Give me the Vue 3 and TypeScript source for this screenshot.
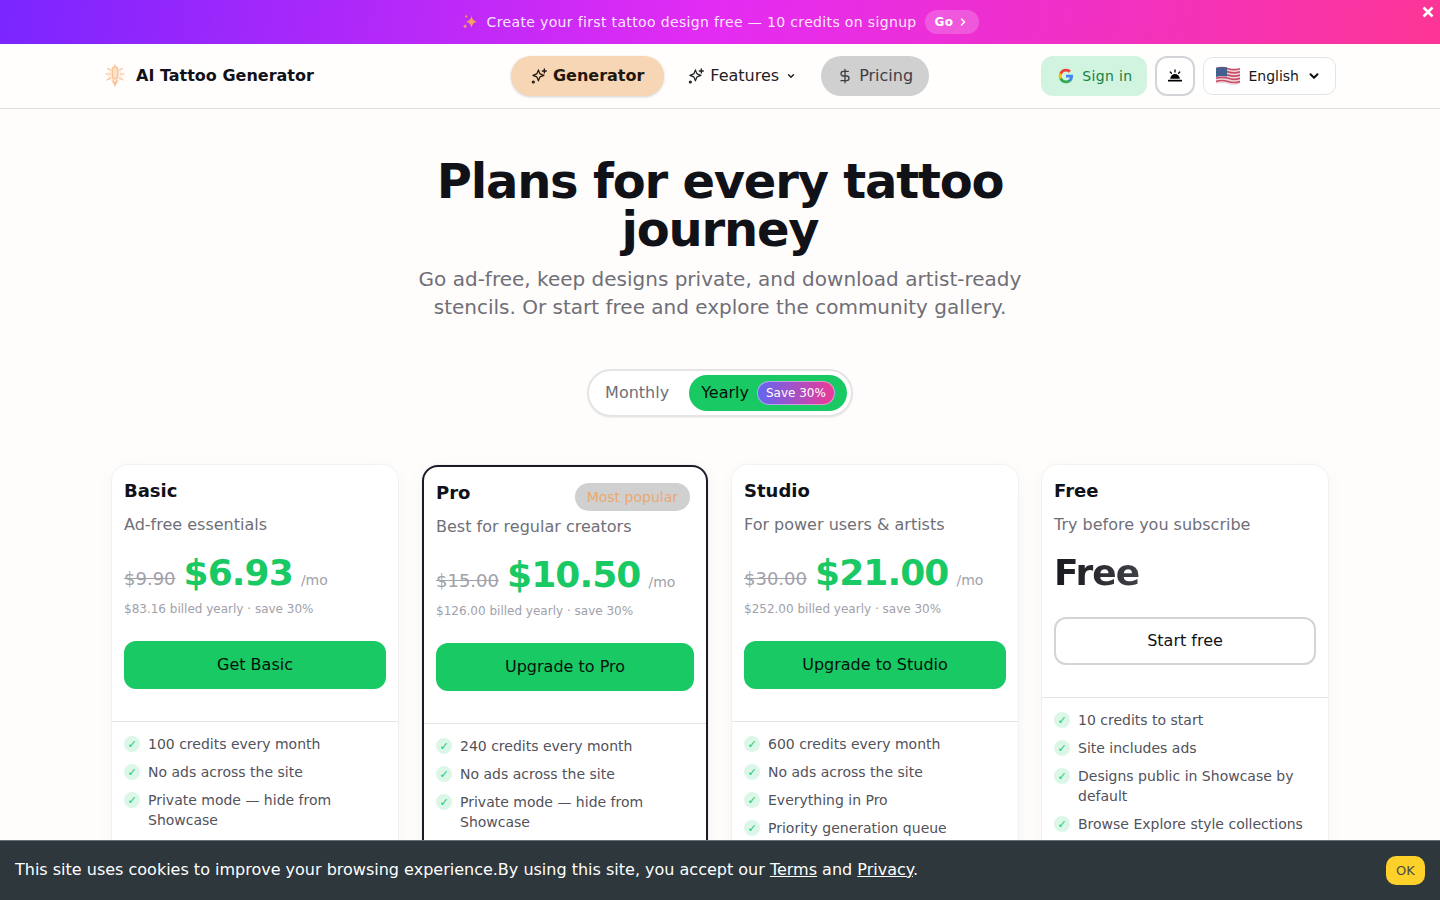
<template>
  <div class="promo">
    <svg class="promo-spark" viewBox="0 0 24 24" width="18" height="18">
      <path d="M14 3c.8 5 2.600 7.200 7 8.500-4.400 1.300-6.200 3.500-7 8.500-.8-5-2.600-7.200-7-8.500 4.400-1.300 6.200-3.500 7-8.500z" fill="#eda05f" />
      <path d="M5.500 14c.4 2.300 1.200 3.200 3 3.800-1.800.6-2.600 1.500-3 3.800-.4-2.300-1.200-3.200-3-3.800 1.800-.6 2.600-1.500 3-3.800z" fill="#eda05f" />
      <path d="M7 1.500c.3 1.700.9 2.400 2.200 2.800C7.900 4.700 7.300 5.400 7 7c-.3-1.600-.9-2.300-2.200-2.700C6.100 3.900 6.700 3.200 7 1.500z" fill="#eda05f" />
    </svg>
    <span class="promo-text">Create your first tattoo design free — 10 credits on signup</span>
    <a class="promo-go">Go
      <svg viewBox="0 0 24 24" width="12" height="12" fill="none" stroke="currentColor" stroke-width="3" stroke-linecap="round" stroke-linejoin="round"><path d="m9 18 6-6-6-6" /></svg>
    </a>
    <button class="promo-close" aria-label="Close">
      <svg viewBox="0 0 12 12" width="12" height="12" fill="none" stroke="#fff" stroke-width="2.600"><path d="M1.500 1.500l9 9M10.500 1.500l-9 9" /></svg>
    </button>
  </div>

  <header class="topbar">
    <div class="topbar-inner">
      <a class="brand">
        <svg class="brand-logo" viewBox="0 0 22 24" width="22" height="24" fill="none" stroke="#f9bf92" stroke-width="1.100" stroke-linecap="round">
          <circle cx="11" cy="11" r="7.500" fill="#fff1e4" stroke="none" />
          <rect x="8.300" y="2.800" width="5.400" height="12" rx="2.700" fill="#fde2cb" stroke-width="1.300" />
          <path d="M9 16l2 5.500 2-5.500M9 18.500h4M11 .8v2" stroke-width="1.300" />
          <path d="M6.500 6L3.500 4.500M6 10H2M6.500 14l-3.500 2M15.500 6l3-1.500M16 10h4M15.500 14l3.500 2" />
        </svg>
        <span>AI Tattoo Generator</span>
      </a>

      <nav class="nav-links">
        <a class="nav-link generator">
          <svg viewBox="0 0 24 24" width="16" height="16" fill="none" stroke="currentColor" stroke-width="2" stroke-linecap="round" stroke-linejoin="round">
            <path d="M11 3l1.900 5.200a3 3 0 0 0 1.800 1.800L20 12l-5.300 2a3 3 0 0 0-1.800 1.800L11 21l-1.900-5.200a3 3 0 0 0-1.800-1.800L2 12l5.300-2a3 3 0 0 0 1.800-1.800z" transform="translate(1 0) scale(.92)" />
            <path d="M20 1.500v6M17 4.500h6" />
            <circle cx="3.500" cy="21" r="1.400" />
          </svg>
          Generator
        </a>
        <a class="nav-link features">
          <svg viewBox="0 0 24 24" width="16" height="16" fill="none" stroke="currentColor" stroke-width="2" stroke-linecap="round" stroke-linejoin="round">
            <path d="M11 3l1.900 5.200a3 3 0 0 0 1.800 1.800L20 12l-5.300 2a3 3 0 0 0-1.800 1.800L11 21l-1.900-5.200a3 3 0 0 0-1.800-1.800L2 12l5.300-2a3 3 0 0 0 1.800-1.800z" transform="translate(1 0) scale(.92)" />
            <path d="M20 1.500v6M17 4.500h6" />
            <circle cx="3.500" cy="21" r="1.400" />
          </svg>
          Features
          <svg class="caret" viewBox="0 0 24 24" width="10" height="10" fill="none" stroke="currentColor" stroke-width="3.500" stroke-linecap="round" stroke-linejoin="round"><path d="m6 9 6 6 6-6" /></svg>
        </a>
        <a class="nav-link pricing">
          <svg viewBox="0 0 24 24" width="16" height="16" fill="none" stroke="currentColor" stroke-width="2" stroke-linecap="round" stroke-linejoin="round">
            <path d="M12 2v20M17 5H9.500a3.500 3.500 0 0 0 0 7h5a3.500 3.500 0 0 1 0 7H6" />
          </svg>
          Pricing
        </a>
      </nav>

      <div class="topbar-actions">
        <button class="signin">
          <svg viewBox="0 0 24 24" width="16" height="16">
            <path fill="#4285F4" d="M22.560 12.250c0-.78-.07-1.530-.2-2.250H12v4.260h5.920c-.26 1.370-1.040 2.530-2.210 3.310v2.770h3.570c2.080-1.920 3.280-4.740 3.280-8.090z" />
            <path fill="#34A853" d="M12 23c2.970 0 5.460-.98 7.280-2.660l-3.570-2.770c-.98.660-2.230 1.060-3.710 1.060-2.860 0-5.290-1.930-6.160-4.530H2.180v2.840C3.990 20.530 7.700 23 12 23z" />
            <path fill="#FBBC05" d="M5.840 14.090c-.22-.66-.35-1.360-.35-2.090s.13-1.430.35-2.090V7.070H2.180C1.430 8.550 1 10.220 1 12s.43 3.450 1.180 4.930l3.660-2.840z" />
            <path fill="#EA4335" d="M12 5.380c1.620 0 3.060.56 4.210 1.640l3.150-3.150C17.450 2.090 14.970 1 12 1 7.700 1 3.990 3.470 2.180 7.070l3.660 2.840c.87-2.600 3.300-4.530 6.160-4.530z" />
          </svg>
          Sign in
        </button>
        <button class="theme-btn" aria-label="Theme">
          <svg viewBox="0 0 16 16" width="16" height="16" fill="#000">
            <path d="M3.200 10.800a4.800 4.800 0 0 1 9.600 0z" />
            <rect x="1" y="11.800" width="14" height="1.700" rx=".5" />
            <path d="M8 2v2M3.300 4l1.100 1.200M12.700 4l-1.100 1.200" stroke="#000" stroke-width="1.300" stroke-linecap="round" />
          </svg>
        </button>
        <button class="lang-btn">
          <svg viewBox="0 0 24 20" width="24" height="20">
            <path d="M0 2Q6 0 12 2T24 2V18Q18 20 12 18T0 18Z" fill="#efd9de" />
            <path v-for="n in 5" :key="n" :d="`M0 ${n * 3.200 - .5}Q6 ${n * 3.200 - 2.500} 12 ${n * 3.200 - .5}T24 ${n * 3.200 - .5}`" fill="none" stroke="#c94d66" stroke-width="1.700" />
            <path d="M0 2Q5 .3 11 1.500V10.500Q5 9.300 0 11Z" fill="#44608f" />
          </svg>
          English
          <svg viewBox="0 0 24 24" width="14" height="14" fill="none" stroke="#111" stroke-width="3.500" stroke-linecap="round" stroke-linejoin="round"><path d="m6 9 6 6 6-6" /></svg>
        </button>
      </div>
    </div>
  </header>

  <main class="pricing-page">
    <h1>Plans for every tattoo journey</h1>
    <p class="lead">Go ad-free, keep designs private, and download artist-ready stencils. Or start free and explore the community gallery.</p>

    <div class="billing-toggle">
      <button class="toggle-option" :class="{ active: billing === 'monthly' }" @click="billing = 'monthly'">Monthly</button>
      <button class="toggle-option" :class="{ active: billing === 'yearly' }" @click="billing = 'yearly'">
        Yearly
        <span class="save-tag">Save 30%</span>
      </button>
    </div>

    <section class="plan-grid">
      <article v-for="plan in plans" :key="plan.name" class="plan-card" :class="{ featured: plan.popular }">
        <span v-if="plan.popular" class="popular-tag">Most popular</span>
        <div class="plan-top">
          <h2>{{ plan.name }}</h2>
          <p class="plan-desc">{{ plan.desc }}</p>
          <div v-if="plan.price" class="price-row">
            <span class="old-price">{{ plan.oldPrice }}</span>
            <span class="price">{{ plan.price }}</span>
            <span class="per">/mo</span>
          </div>
          <div v-else class="price-row">
            <span class="price free">Free</span>
          </div>
          <p v-if="plan.billed" class="billed">{{ plan.billed }}</p>
          <button class="plan-cta" :class="{ outline: !plan.price }">{{ plan.cta }}</button>
        </div>
        <ul class="plan-features">
          <li v-for="item in plan.features" :key="item">
            <span class="tick">✓</span>
            <span>{{ item }}</span>
          </li>
        </ul>
      </article>
    </section>
  </main>

  <div class="cookie-bar">
    <p>This site uses cookies to improve your browsing experience.By using this site, you accept our <a>Terms</a> and <a>Privacy</a>.</p>
    <button class="cookie-ok">OK</button>
  </div>
</template>

<script setup lang="ts">
import { ref } from 'vue';

interface Plan {
  name: string;
  desc: string;
  oldPrice?: string;
  price?: string;
  billed?: string;
  cta: string;
  popular?: boolean;
  features: string[];
}

const billing = ref<'monthly' | 'yearly'>('yearly');

const plans: Plan[] = [
  {
    name: 'Basic',
    desc: 'Ad-free essentials',
    oldPrice: '$9.90',
    price: '$6.93',
    billed: '$83.16 billed yearly · save 30%',
    cta: 'Get Basic',
    features: ['100 credits every month', 'No ads across the site', 'Private mode — hide from Showcase']
  },
  {
    name: 'Pro',
    desc: 'Best for regular creators',
    oldPrice: '$15.00',
    price: '$10.50',
    billed: '$126.00 billed yearly · save 30%',
    cta: 'Upgrade to Pro',
    popular: true,
    features: ['240 credits every month', 'No ads across the site', 'Private mode — hide from Showcase']
  },
  {
    name: 'Studio',
    desc: 'For power users & artists',
    oldPrice: '$30.00',
    price: '$21.00',
    billed: '$252.00 billed yearly · save 30%',
    cta: 'Upgrade to Studio',
    features: ['600 credits every month', 'No ads across the site', 'Everything in Pro', 'Priority generation queue']
  },
  {
    name: 'Free',
    desc: 'Try before you subscribe',
    cta: 'Start free',
    features: ['10 credits to start', 'Site includes ads', 'Designs public in Showcase by default', 'Browse Explore style collections']
  }
];
</script>

<style>
html,
body {
  margin: 0;
  background: #fffdfb;
  overflow: hidden;
}
</style>

<style scoped>
* {
  box-sizing: border-box;
}

button {
  font-family: inherit;
  cursor: pointer;
}

.promo {
  position: relative;
  height: 44px;
  display: flex;
  align-items: center;
  justify-content: center;
  gap: 8px;
  background: linear-gradient(100deg, #7a25ff 0%, #e42cf3 50%, #fd3596 100%);
  color: rgba(255, 255, 255, 0.9);
  font-family: "DejaVu Sans", sans-serif;
  font-size: 14px;
  letter-spacing: 0.025em;
}

.promo-go {
  display: inline-flex;
  align-items: center;
  gap: 4px;
  height: 24px;
  padding: 0 10px;
  border-radius: 12px;
  background: rgba(255, 255, 255, 0.2);
  color: #fff;
  font-size: 12px;
  font-weight: 700;
}

.promo-close {
  position: absolute;
  top: 6px;
  right: 6px;
  padding: 0;
  border: 0;
  background: none;
  line-height: 0;
}

.topbar {
  height: 65px;
  background: #fffefd;
  border-bottom: 1px solid #dcdfe1;
  font-family: "DejaVu Sans", sans-serif;
}

.topbar-inner {
  width: 1232px;
  height: 64px;
  margin: 0 auto;
  display: grid;
  grid-template-columns: 1fr auto 1fr;
  align-items: center;
}

.brand {
  display: flex;
  align-items: center;
  gap: 10px;
  font-size: 16px;
  line-height: 24px;
  font-weight: 700;
  color: #111118;
}

.nav-links {
  display: flex;
  align-items: center;
  gap: 8px;
}

.nav-link {
  display: flex;
  align-items: center;
  height: 40px;
  gap: 6px;
  padding: 0 16px;
  border-radius: 20px;
  font-size: 16px;
  line-height: 24px;
  color: #1f2024;
}

.nav-link.generator {
  padding: 0 20px;
  background: #f6d6b5;
  color: #22170c;
  font-weight: 700;
  box-shadow: 0 1px 3px rgba(0, 0, 0, 0.18);
}

.nav-link.pricing {
  background: #d0d0d0;
  color: #3f3f46;
}

.caret {
  margin: 0 1px;
}

.topbar-actions {
  display: flex;
  justify-content: flex-end;
  align-items: center;
  gap: 8px;
}

.signin {
  display: flex;
  align-items: center;
  gap: 8px;
  height: 40px;
  padding: 0 15px 0 17px;
  border: 0;
  border-radius: 12px;
  background: #d1f4e0;
  color: #158244;
  font-size: 14px;
  line-height: 20px;
  letter-spacing: 0.025em;
}

.theme-btn {
  display: flex;
  align-items: center;
  justify-content: center;
  width: 40px;
  height: 40px;
  padding: 0;
  border: 2px solid #d4d4d8;
  border-radius: 12px;
  background: #fff;
}

.lang-btn {
  display: flex;
  align-items: center;
  gap: 8px;
  height: 38px;
  padding: 0 14px 0 12px;
  border: 1px solid #e4e4e7;
  border-radius: 10px;
  background: #fff;
  color: #18181b;
  font-size: 14px;
  line-height: 20px;
}

.pricing-page {
  width: 1216px;
  height: 800px;
  margin: 0 auto;
  padding-top: 48px;
  font-family: "DejaVu Sans", sans-serif;
  text-align: center;
}

h1 {
  max-width: 672px;
  margin: 0 auto;
  font-size: 48px;
  line-height: 48px;
  font-weight: 700;
  letter-spacing: -0.025em;
  color: #111118;
}

.lead {
  max-width: 640px;
  margin: 12px auto 0;
  font-size: 20px;
  line-height: 28px;
  color: #6f6f78;
}

.billing-toggle {
  display: flex;
  width: fit-content;
  height: 48px;
  margin: 48px auto 0;
  padding: 4px;
  gap: 8px;
  border: 2px solid #e4e4e7;
  border-radius: 24px;
  background: #fff;
  box-shadow: 0 1px 2px rgba(0, 0, 0, 0.06);
}

.toggle-option {
  display: flex;
  align-items: center;
  gap: 8px;
  padding: 0 12px;
  border: 0;
  border-radius: 18px;
  background: none;
  color: #6f6f78;
  font-size: 16px;
  line-height: 24px;
}

.toggle-option.active {
  background: #18c964;
  color: #06130b;
}

.save-tag {
  display: inline-flex;
  align-items: center;
  height: 24px;
  padding: 0 8px;
  border: 1px solid rgba(255, 255, 255, 0.45);
  border-radius: 12px;
  background: linear-gradient(90deg, #6366f1, #ec3a97);
  color: #fff;
  font-size: 12px;
  line-height: 16px;
}

.plan-grid {
  display: grid;
  grid-template-columns: repeat(4, 1fr);
  gap: 24px;
  margin-top: 48px;
  text-align: left;
}

.plan-card {
  position: relative;
  background: #fff;
  border-radius: 16px;
  box-shadow: 0 0 0 1px rgba(0, 0, 0, 0.03), 0 4px 20px rgba(0, 0, 0, 0.04);
}

.plan-card.featured {
  border: 2px solid #1c1b29;
}

.popular-tag {
  position: absolute;
  top: 16px;
  right: 16px;
  display: flex;
  align-items: center;
  height: 28px;
  padding: 0 12px;
  border-radius: 14px;
  background: #d0d0d0;
  color: #e9a970;
  font-size: 14px;
  line-height: 20px;
}

.plan-top {
  padding: 12px 12px 32px;
  border-bottom: 1px solid #e4e4e7;
}

h2 {
  margin: 0;
  font-size: 18px;
  line-height: 28px;
  font-weight: 700;
  color: #111118;
}

.plan-desc {
  margin: 8px 0 0;
  font-size: 16px;
  line-height: 24px;
  color: #6f6f78;
}

.price-row {
  display: flex;
  align-items: baseline;
  gap: 8px;
  height: 40px;
  margin-top: 16px;
  line-height: 40px;
}

.old-price {
  font-size: 18px;
  color: #a1a1aa;
  text-decoration: line-through;
}

.price {
  font-size: 36px;
  font-weight: 700;
  letter-spacing: -0.025em;
  color: #18c964;
}

.price.free {
  background: linear-gradient(90deg, #18181f, #3f3f46);
  -webkit-background-clip: text;
  background-clip: text;
  color: transparent;
}

.per {
  font-size: 14px;
  color: #a1a1aa;
}

.billed {
  margin: 8px 0 0;
  font-size: 12px;
  line-height: 16px;
  color: #a1a1aa;
}

.plan-cta {
  display: block;
  width: 100%;
  height: 48px;
  margin-top: 24px;
  border: 0;
  border-radius: 12px;
  background: #18c964;
  color: #06130b;
  font-size: 16px;
  line-height: 24px;
}

.plan-cta.outline {
  border: 2px solid #d4d4d8;
  background: #fff;
  color: #111118;
}

.plan-features {
  list-style: none;
  margin: 0;
  padding: 12px 12px 24px;
  display: flex;
  flex-direction: column;
  gap: 8px;
  font-size: 14px;
  line-height: 20px;
  color: #52525b;
}

.plan-features li {
  display: flex;
  gap: 8px;
}

.tick {
  flex: none;
  display: flex;
  align-items: center;
  justify-content: center;
  width: 16px;
  height: 16px;
  margin-top: 2px;
  border-radius: 50%;
  background: #dcf7e8;
  color: #18c964;
  font-size: 11px;
  font-weight: 700;
  line-height: 1;
}

.cookie-bar {
  position: fixed;
  left: 0;
  right: 0;
  bottom: 0;
  height: 60px;
  display: flex;
  align-items: center;
  justify-content: space-between;
  padding: 0 15px;
  background: #2d373c;
  border-top: 1px solid #66707a;
  font-family: "DejaVu Sans", sans-serif;
  font-size: 16px;
  line-height: 24px;
  color: #fff;
}

.cookie-bar p {
  margin: 0 0 2px;
}

.cookie-bar a {
  text-decoration: underline;
}

.cookie-ok {
  width: 39px;
  height: 29px;
  padding: 0;
  border: 0;
  border-radius: 10px;
  background: #fdd02a;
  color: #4b4b45;
  font-size: 13px;
}
</style>
